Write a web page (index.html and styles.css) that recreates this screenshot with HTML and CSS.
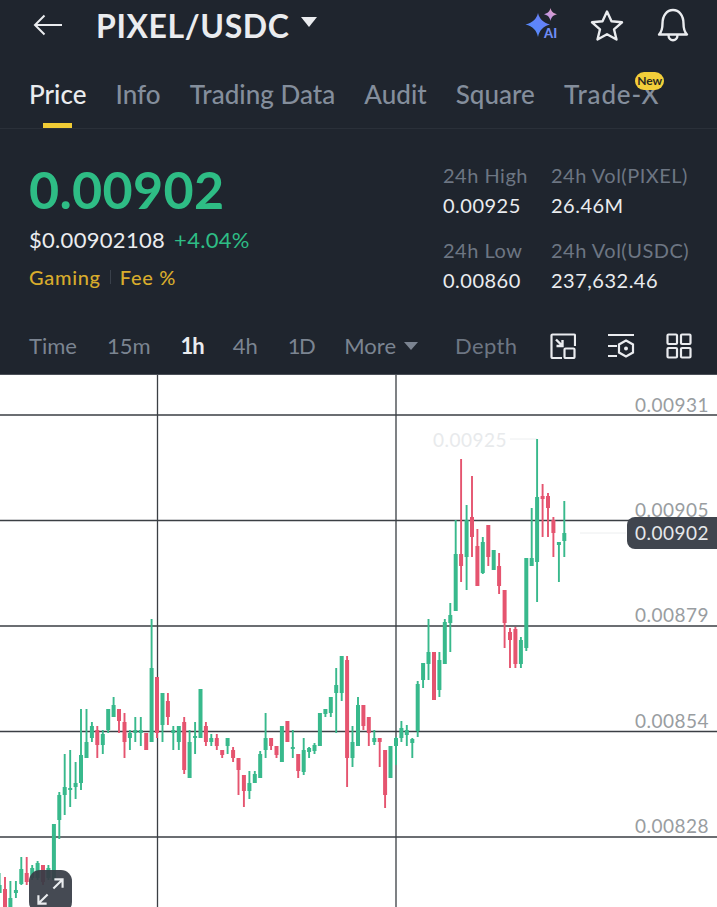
FILE: index.html
```html
<!DOCTYPE html>
<html lang="en">
<head>
<meta charset="utf-8">
<title>PIXEL/USDC</title>
<link rel="stylesheet" href="styles.css">
</head>
<body>
<div class="page">
  <div class="dark">
    <header class="topbar">
      <svg class="back" viewBox="0 0 30 24"><path d="M29 12H2M11.500 2.500 2 12l9.500 9.500"/></svg>
      <span class="pair">PIXEL/USDC</span>
      <span class="caret caret-light"></span>
      <div class="top-icons">
        <svg class="ai" viewBox="0 0 36 34">
          <defs>
            <linearGradient id="spark" x1="0" y1="1" x2="1" y2="0"><stop offset="0" stop-color="#4d8dfb"/><stop offset="1" stop-color="#6f7cf6"/></linearGradient>
            <linearGradient id="spark2" x1="0" y1="1" x2="1" y2="0"><stop offset="0" stop-color="#a98cf2"/><stop offset="1" stop-color="#f0a7c0"/></linearGradient>
          </defs>
          <path class="s1" d="M13 6c1.500 6 5 9.500 12 11.500-7 2-10.500 5.500-12 12.500-1.500-7-5-10.500-12.500-12.500C8 15.500 11.500 12 13 6Z"/>
          <path class="s2" d="M25.500 1c.8 3.500 2.500 5.200 6.500 6.300-4 1.100-5.700 2.800-6.500 6.700-.8-3.900-2.500-5.600-6.500-6.700 4-1.100 5.700-2.800 6.500-6.300Z"/>
          <text class="ai-text" x="19" y="31">AI</text>
        </svg>
        <svg class="star" viewBox="0 0 34 33"><path d="M17 2.500 21.500 12.300 32 13.300 24 20.300 26.500 30.500 17 25.200 7.500 30.500 10 20.300 2 13.300 12.500 12.300Z"/></svg>
        <svg class="bell" viewBox="0 0 32 34"><path d="M2 26.500c3-3 3.500-6 3.500-11C5.500 7.500 10 2 16 2s10.500 5.500 10.500 13.500c0 5 .5 8 3.500 11ZM11.500 27c0 7 9 7 9 0"/></svg>
      </div>
    </header>

    <nav class="tabs">
      <span class="tab tab-on">Price</span>
      <span class="tab">Info</span>
      <span class="tab">Trading Data</span>
      <span class="tab">Audit</span>
      <span class="tab">Square</span>
      <span class="tab tab-new">Trade-X<span class="badge">New</span></span>
    </nav>

    <section class="stats">
      <div class="price-col">
        <div class="last">0.00902</div>
        <div class="sub"><span>$0.00902108</span><span class="chg">+4.04%</span></div>
        <div class="tags"><span>Gaming</span><i class="sep"></i><span>Fee %</span></div>
      </div>
      <div class="range">
        <div class="cell"><span class="k">24h High</span><span class="v">0.00925</span></div>
        <div class="cell"><span class="k">24h Vol(PIXEL)</span><span class="v">26.46M</span></div>
        <div class="cell"><span class="k">24h Low</span><span class="v">0.00860</span></div>
        <div class="cell"><span class="k">24h Vol(USDC)</span><span class="v">237,632.46</span></div>
      </div>
    </section>

    <div class="frames">
      <span>Time</span>
      <span>15m</span>
      <span class="frame-on">1h</span>
      <span>4h</span>
      <span class="tight">1D</span>
      <span class="more">More<span class="caret caret-gray"></span></span>
      <span class="depth">Depth</span>
      <svg class="tool tool-a" viewBox="0 0 26 26"><path d="M10 1.500H2.500a1 1 0 0 0-1 1V24a1 1 0 0 0 1 1H12M10 1.500h14a1 1 0 0 1 1 1V13"/><path class="thick" d="M6 6.500l6 6M12.500 7v6h-6"/><rect x="14.500" y="15.500" width="10" height="9.500" rx="1"/></svg>
      <svg class="tool tool-b" viewBox="0 0 28 26"><path d="M1 2h26M1 13h9M1 23h9"/><path d="M19 7.500 26 11.500V19.500L19 23.500 12 19.500V11.500Z"/><circle class="dot" cx="19" cy="15.500" r="2"/></svg>
      <svg class="tool tool-c" viewBox="0 0 26 26"><rect x="1.500" y="1.500" width="9.500" height="9.500" rx="1"/><rect x="15" y="1.500" width="9.500" height="9.500" rx="1"/><rect x="1.500" y="15" width="9.500" height="9.500" rx="1"/><rect x="15" y="15" width="9.500" height="9.500" rx="1"/></svg>
    </div>
  </div>

  <main class="chart">
    <svg id="plot" class="plot" viewBox="0 375 717 532" preserveAspectRatio="none">
      <path class="grid" d="M0 415H717M0 520.500H717M0 626H717M0 731.500H717M0 837H717M157.500 375V907M396 375V907"/>
      <path class="marker" d="M510 439H537M580 533H626"/>
    </svg>
    <span class="axis a1">0.00931</span>
    <span class="axis a2">0.00905</span>
    <span class="axis a3">0.00879</span>
    <span class="axis a4">0.00854</span>
    <span class="axis a5">0.00828</span>
    <span class="high">0.00925</span>
    <span class="now">0.00902</span>
    <button class="expand" aria-label="Expand">
      <svg viewBox="0 0 30 30"><path d="M18 12 27 3M19 2.500h8.500V11M12 18 3 27M2.500 19v8.500H11"/></svg>
    </button>
  </main>
</div>
<script src="chart.js"></script>
</body>
</html>
```
FILE: styles.css
```css
* { box-sizing: border-box; }
html, body { margin: 0; padding: 0; }
body { background: #fff; font-family: Lato, "Open Sans", sans-serif; }
.page { width: 717px; height: 907px; overflow: hidden; display: flex; flex-direction: column; }
.dark { background: #1f252e; height: 375px; flex: none; border-bottom: 1px solid #4a4f57; }

.topbar { display: flex; align-items: center; height: 50px; padding: 0 28px 0 33px; }
.back { width: 30px; height: 24px; fill: none; stroke: #eaecef; stroke-width: 2; margin-right: 33px; }
.pair { color: #eaecef; font-size: 32px; font-weight: 700; letter-spacing: .6px; }
.caret { display: inline-block; width: 0; height: 0; border-style: solid; border-color: transparent; border-bottom-width: 0; }
.caret-light { border-width: 10px 8.500px 0; border-top-color: #eaecef; margin: 0 0 6px 11px; }
.top-icons { margin-left: auto; display: flex; align-items: center; gap: 31px; }
.ai { width: 36px; height: 34px; margin-top: -2px; }
.s1 { fill: url(#spark); }
.s2 { fill: url(#spark2); }
.ai-text { font: 900 13px Lato, sans-serif; fill: #6f8df5; }
.star { width: 34px; height: 33px; fill: none; stroke: #eaecef; stroke-width: 2.400; stroke-linejoin: round; margin: 0 2px 0 -2px; }
.bell { width: 32px; height: 34px; fill: none; stroke: #eaecef; stroke-width: 2.400; stroke-linejoin: round; }

.tabs { display: flex; gap: 29px; padding: 26px 0 0 29px; height: 79px; border-bottom: 1px solid #2a3039; }
.tab { color: #848e9c; font-size: 26px; font-weight: 500; line-height: 36px; position: relative; height: 52px; letter-spacing: .03px; }
.tab-on { color: #eaecef; }
.tab-on::after { content: ""; position: absolute; left: 14px; width: 29px; top: 47px; height: 5px; background: #f0cb35; }
.tab-new { position: relative; letter-spacing: .85px; }
.badge { position: absolute; right: -5px; top: -4px; width: 29px; height: 18px; text-align: center; background: #f3cf3a; color: #2a2a20; font-size: 12px; font-weight: 700; letter-spacing: 0; line-height: 18px; border-radius: 9px; }

.stats { display: flex; justify-content: space-between; height: 188px; padding: 34px 26px 0 29px; }
.last { color: #2ebd85; font-size: 52px; font-weight: 700; line-height: 52px; letter-spacing: .3px; }
.sub { color: #eaecef; font-size: 22px; line-height: 26px; margin-top: 12px; display: flex; gap: 9px; letter-spacing: .3px; }
.chg { color: #2ebd85; }
.tags { color: #d8ac2c; font-size: 20px; font-weight: 500; line-height: 24px; margin-top: 12px; display: flex; align-items: center; gap: 9px; letter-spacing: .7px; }
.sep { width: 1px; height: 14px; background: #39404a; }
.range { display: grid; grid-template-columns: 108px 140px; grid-auto-rows: 75px; margin-top: -1px; }
.cell { display: flex; flex-direction: column; gap: 4px; }
.k { color: #6d7683; font-size: 20px; line-height: 26px; letter-spacing: .5px; white-space: nowrap; }
.v { color: #eaecef; font-size: 20px; line-height: 26px; letter-spacing: .5px; }

.frames { display: flex; align-items: center; height: 57px; padding-left: 29px; color: #7b8491; font-size: 22px; }
.frames > span { margin-right: 30px; }
.frames > .frame-on { color: #eaecef; font-weight: 700; margin-right: 29px; letter-spacing: -1px; }
.frames > .tight { letter-spacing: -1.500px; }
.frames > .more { margin-right: 37px; display: flex; align-items: center; }
.caret-gray { border-width: 8px 7.500px 0; border-top-color: #7b8491; margin-left: 8px; }
.frames > .depth { color: #6d7683; margin-right: 32px; letter-spacing: .4px; }
.tool { fill: none; stroke: #eaecef; stroke-width: 2.200; }
.tool-a { width: 26px; height: 26px; margin-right: 31px; }
.tool-b { width: 28px; height: 26px; margin-right: 31px; }
.tool-c { width: 26px; height: 26px; }
.thick { stroke-width: 2.400; }
.dot { fill: #eaecef; stroke: none; }

.chart { position: relative; flex: 1; background: #fff; overflow: hidden; }
.plot { position: absolute; inset: 0; width: 100%; height: 100%; }
.grid { fill: none; stroke: #3b3f44; stroke-width: 1.300; }
.marker { fill: none; stroke: #eceeef; stroke-width: 1; }
.wick { fill: none; stroke-width: 1.900; }
.body { fill: none; stroke-width: 4; }
.up { stroke: #38b98c; }
.down { stroke: #e5546f; }
.axis { position: absolute; left: 635px; color: #999da1; font-size: 19px; line-height: 20px; letter-spacing: .5px; }
.a1 { top: 20px; }
.a2 { top: 125px; }
.a3 { top: 230px; }
.a4 { top: 336px; }
.a5 { top: 441px; }
.high { position: absolute; left: 433px; top: 55px; color: #e8eaec; font-size: 19px; line-height: 20px; letter-spacing: .5px; }
.now { position: absolute; left: 627px; top: 142px; width: 100px; height: 32px; padding-left: 8px; background: #40454e; color: #e6e8ea; font-size: 19px; line-height: 32px; letter-spacing: .5px; border-radius: 8px; }
.expand { position: absolute; left: 29px; top: 495px; width: 43px; height: 43px; padding: 7px; background: rgba(55, 60, 70, .93); border: 0; border-radius: 11px; }
.expand svg { display: block; width: 29px; height: 29px; fill: none; stroke: #eaecef; stroke-width: 2.200; }
```
FILE: chart.js
```js
// Candles newest first: wick top, wick bottom, body top, body bottom, direction (1 up, 0 down).
var candles = [
[501,557,533,541,1],[542,582,542,545,1],[517,557,520,533,0],[493,537,496,508,0],[484,537,496,499,0],
[439,602,497,562,1],[508,566,558,566,1],[558,651,558,648,1],[637,668,640,664,1],[627,668,629,664,0],
[628,668,632,640,0],[590,648,590,623,0],[553,594,566,586,0],[550,570,550,570,1],[525,566,525,557,0],
[537,574,542,573,1],[529,586,546,586,0],[476,557,517,537,0],[505,590,520,557,1],[459,582,554,566,0],
[520,611,554,611,1],[603,652,615,623,1],[619,664,622,664,1],[652,697,660,690,1],[652,700,652,700,0],
[619,680,652,664,1],[663,688,663,680,1],[681,737,684,731,1],[738,758,739,743,1],[725,746,730,735,1],
[721,742,728,738,1],[737,765,738,746,1],[746,778,746,778,1],[750,808,750,795,0],[738,767,738,742,0],
[730,745,738,742,1],[717,746,717,733,0],[705,730,705,726,0],[697,746,705,746,1],[726,767,742,758,1],
[656,787,660,758,0],[656,701,656,693,1],[668,733,685,693,1],[697,717,697,713,1],[709,717,709,714,1],
[713,746,713,746,1],[743,754,745,751,1],[747,758,748,752,1],[738,775,750,772,1],[754,778,754,771,0],
[730,758,747,749,1],[721,742,721,742,0],[726,762,726,762,1],[746,758,746,755,0],[738,750,738,746,0],
[713,758,738,750,1],[751,778,754,778,1],[771,783,774,783,1],[771,799,783,791,1],[775,807,775,791,0],
[758,795,758,770,0],[747,762,750,758,0],[738,754,738,746,1],[750,758,750,755,0],[734,750,738,746,0],
[734,746,738,742,1],[722,746,726,742,0],[689,738,689,738,1],[722,754,736,738,1],[730,778,742,778,1],
[717,774,722,770,0],[726,750,726,742,1],[726,750,730,733,1],[693,725,701,717,0],[693,742,693,725,1],
[677,738,677,733,0],[619,742,668,742,1],[733,750,733,750,0],[717,746,730,733,1],[717,742,730,733,1],
[730,750,733,738,1],[713,758,722,742,0],[709,733,709,721,0],[697,717,705,717,1],[709,733,709,730,1],
[730,754,734,745,1],[726,758,730,745,0],[722,742,726,738,1],[709,758,742,758,1],[709,790,755,783,1],
[762,799,783,787,1],[750,807,788,790,1],[754,815,787,795,1],[792,839,795,820,1],[824,880,824,880,1],
[865,880,868,878,1],[865,885,865,882,0],[861,880,863,878,1],[865,880,868,878,1],[857,885,873,882,0],
[857,885,869,884,1],[881,898,890,893,1],[881,907,898,907,1],[877,907,889,907,0],[873,893,885,893,1]
];

var plot = document.getElementById("plot");
var NS = "http://www.w3.org/2000/svg";
var paths = { wick1: "", wick0: "", body1: "", body0: "" };

candles.forEach(function (c, k) {
  var x = (564.3 - 5.43 * k).toFixed(1);
  paths["wick" + c[4]] += "M" + x + " " + c[0] + "V" + c[1];
  paths["body" + c[4]] += "M" + x + " " + c[2] + "V" + c[3];
});

[["wick", 1, "up"], ["wick", 0, "down"], ["body", 1, "up"], ["body", 0, "down"]].forEach(function (p) {
  var el = document.createElementNS(NS, "path");
  el.setAttribute("class", p[0] + " " + p[2]);
  el.setAttribute("d", paths[p[0] + p[1]]);
  plot.appendChild(el);
});
```
